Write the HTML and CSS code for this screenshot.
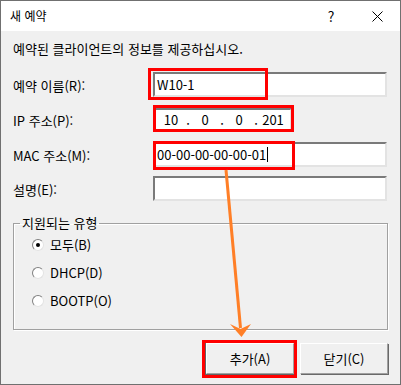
FILE: index.html
```html
<!DOCTYPE html>
<html lang="ko">

<head>
	<meta charset="utf-8">
	<title>새 예약</title>
	<link rel="stylesheet" href="styles.css">
</head>

<body>
	<div class="window">
		<!-- Title bar -->
		<div class="titlebar">
			<span class="title">새 예약</span>
			<span class="tb-btn">?</span>
			<span class="tb-btn">
				<svg width="11" height="11" viewBox="0 0 11 11">
					<path d="M0.5 0.5 L10.5 10.5 M10.5 0.5 L0.5 10.5" stroke="#000" stroke-width="1" fill="none" />
				</svg>
			</span>
		</div>

		<div class="content">
			<p class="intro">예약된 클라이언트의 정보를 제공하십시오.</p>

			<!-- Fields -->
			<div class="form-row">
				<label>예약 이름(R):</label>
				<div class="textbox">W10-1</div>
			</div>
			<div class="form-row">
				<label>IP 주소(P):</label>
				<div class="textbox ip-box">
					<span class="octet">10</span><span class="dot">.</span>
					<span class="octet">0</span><span class="dot">.</span>
					<span class="octet">0</span><span class="dot">.</span>
					<span class="octet">201</span>
				</div>
			</div>
			<div class="form-row">
				<label>MAC 주소(M):</label>
				<div class="textbox">00-00-00-00-00-01<span class="caret"></span></div>
			</div>
			<div class="form-row form-row-last">
				<label>설명(E):</label>
				<div class="textbox"></div>
			</div>

			<!-- Supported types -->
			<fieldset class="group">
				<legend>지원되는 유형</legend>
				<div class="option"><span class="radio checked"></span>모두(B)</div>
				<div class="option"><span class="radio"></span>DHCP(D)</div>
				<div class="option"><span class="radio"></span>BOOTP(O)</div>
			</fieldset>

			<!-- Buttons -->
			<div class="btn-group">
				<button class="btn btn-default">추가(A)</button>
				<button class="btn">닫기(C)</button>
			</div>
		</div>

		<!-- Annotations drawn over the dialog -->
		<svg class="marks" width="401" height="385" viewBox="0 0 401 385">
			<g fill="none" stroke="#ff0000" stroke-width="3">
				<rect x="149.5" y="69.5" width="117" height="29" />
				<rect x="154.5" y="106.5" width="138" height="24" />
				<rect x="154.5" y="142.5" width="139" height="26" />
				<rect x="203.5" y="341.5" width="92" height="35" />
			</g>
			<line x1="226" y1="170" x2="240.5" y2="328" stroke="#ff7f27" stroke-width="3" />
			<polygon points="230,324 240.5,329 251,324 241.5,337" fill="#ff7f27" />
		</svg>
	</div>
</body>

</html>
```

FILE: styles.css
```css
/* Reset page and set the dialog font */
body {
	margin: 0;
	font-family: "Noto Sans CJK KR", "Noto Sans", sans-serif;
	font-size: 13px;
	line-height: 16px;
	color: #000;
}

/* Dialog frame */
.window {
	position: relative;
	width: 401px;
	height: 385px;
	box-sizing: border-box;
	border: 1px solid #707070;
	background-color: #f0f0f0;
}

/* Title bar */
.titlebar {
	display: flex;
	align-items: center;
	height: 30px;
	background-color: #fff;
	font-size: 12px;
}

.title {
	flex: 1;
	padding-left: 9px;
}

.tb-btn {
	display: flex;
	align-items: center;
	justify-content: center;
	width: 46px;
	height: 30px;
	font-size: 14px;
}

/* Dialog body */
.content {
	padding: 0 12px 0 12px;
}

.intro {
	margin: 10px 0 15px;
}

/* Label + text box rows */
.form-row {
	display: flex;
	align-items: center;
	height: 25px;
	margin-bottom: 10px;
}

.form-row label {
	width: 140px;
	padding-top: 2px;
}

.form-row-last {
	margin-top: -1px;
}

.textbox {
	display: flex;
	align-items: center;
	box-sizing: border-box;
	width: 234px;
	height: 25px;
	padding: 0 2px;
	border: 2px solid;
	border-color: #7a7a7a #e3e3e3 #e3e3e3 #7a7a7a;
	background-color: #fff;
	white-space: nowrap;
}

.ip-box {
	width: 139px;
	height: 24px;
}

.octet {
	width: 28px;
	text-align: center;
}

.dot {
	width: 6px;
	text-align: center;
}

.caret {
	display: inline-block;
	width: 1px;
	height: 15px;
	margin-left: 1px;
	background-color: #000;
}

/* Group box */
.group {
	margin: 14px 0 0;
	padding: 0 8px 14px;
	border: 1px solid #a0a0a0;
	box-shadow: inset 1px 1px 0 #fff, 1px 1px 0 #fff;
}

.group legend {
	padding: 0 2px;
	margin-left: -2px;
}

.option {
	display: flex;
	align-items: center;
	height: 28px;
	padding-left: 10px;
}

/* Classic radio button */
.radio {
	position: relative;
	box-sizing: border-box;
	width: 12px;
	height: 12px;
	margin-right: 6px;
	border: 1px solid;
	border-color: #808080 #e3e3e3 #e3e3e3 #808080;
	border-radius: 50%;
	background-color: #fff;
}

.radio.checked::after {
	content: "";
	position: absolute;
	left: 3px;
	top: 3px;
	width: 4px;
	height: 4px;
	border-radius: 50%;
	background-color: #000;
}

/* Buttons */
.btn-group {
	display: flex;
	justify-content: flex-end;
	gap: 6px;
	margin-top: 13px;
}

.btn {
	width: 88px;
	height: 31px;
	padding: 0;
	font-family: inherit;
	font-size: 13px;
	color: #000;
	background-color: #f0f0f0;
	border: 1px solid;
	border-color: #fff #a0a0a0 #a0a0a0 #fff;
	box-shadow: 1px 1px 0 #696969;
}

.btn-default {
	outline: 1px solid #646464;
}

/* Annotation overlay */
.marks {
	position: absolute;
	left: -1px;
	top: -1px;
	pointer-events: none;
}
```
